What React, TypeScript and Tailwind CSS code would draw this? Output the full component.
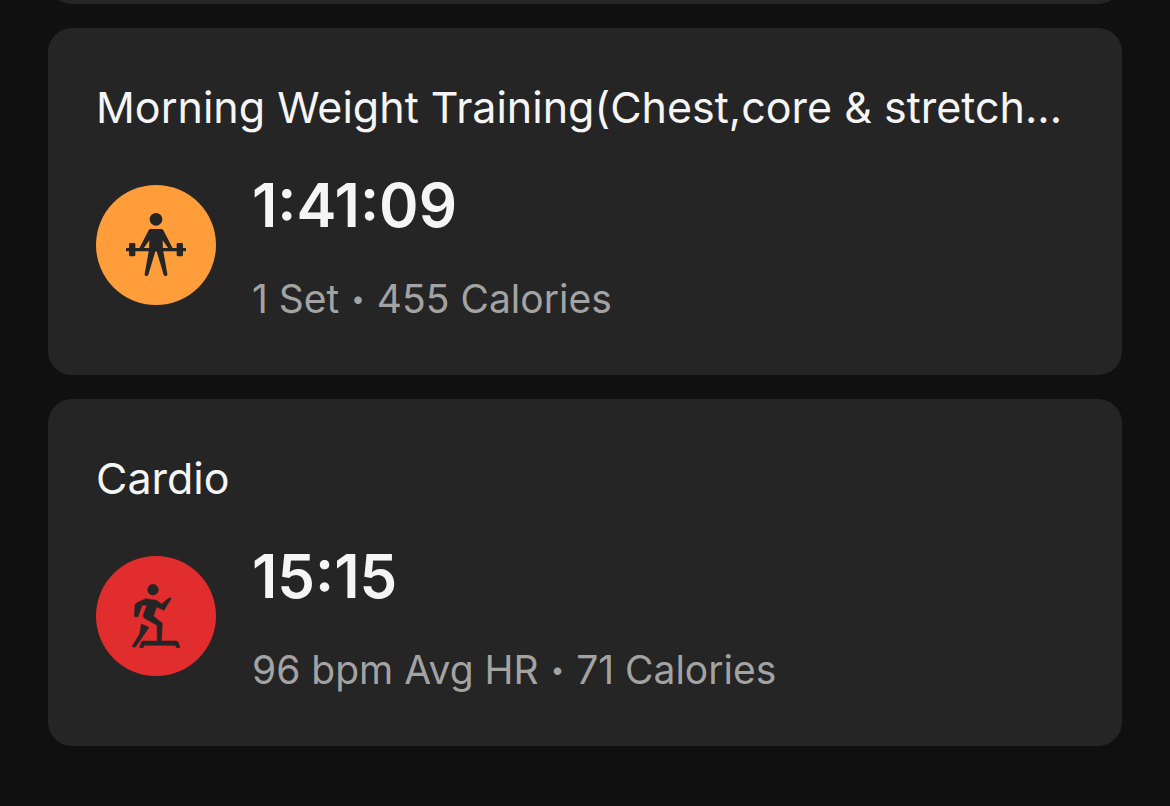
import { Fragment, type ReactNode } from "react";

type Workout = {
  id: string;
  title: string;
  duration: string;
  stats: string[];
  badge: string;
  icon: ReactNode;
};

function WeightsIcon() {
  return (
    <svg viewBox="0 0 360 360" className="h-full w-full" fill="#252525" aria-hidden="true">
      <circle cx="180" cy="103" r="19" />
      {/* arms and torso */}
      <path d="M164 132H196Q200 132 202 136L230 190H217L200 166L201 199H159L160 166L143 190H130L158 136Q160 132 164 132Z" />
      {/* legs */}
      <path d="M159 196H179L157 269Q155 274 150 273Q145 272 146 267L157 205Z" />
      <path d="M201 196H181L203 269Q205 274 210 273Q215 272 214 267L203 205Z" />
      {/* barbell */}
      <rect x="90" y="189" width="180" height="10" rx="2" />
      <rect x="99" y="174" width="19" height="40" rx="4" />
      <rect x="242" y="174" width="19" height="40" rx="4" />
    </svg>
  );
}

function CardioIcon() {
  return (
    <svg
      viewBox="0 0 360 360"
      className="h-full w-full"
      fill="#252525"
      stroke="#252525"
      strokeWidth="1.5"
      strokeLinejoin="round"
      aria-hidden="true"
    >
      <circle cx="171" cy="101" r="16" />
      <path d="M149 128L181 133L197 144L215 129Q220 124 226 127L204 163L182 153L172 180L199 202L196 256H184L183 208L146 187Q140 182 142 176L153 147L138 148L126 182H115L117 148Q118 143 123 140Z" />
      {/* trailing leg */}
      <path d="M136 204L159 214L120 271Q118 275 108 272L131 234Z" />
      {/* step */}
      <path d="M142 255H240Q245 255 247 260L252 275H242L238 268H145L142 275H131L135 260Q137 255 142 255Z" />
    </svg>
  );
}

const workouts: Workout[] = [
  {
    id: "weights",
    title: "Morning Weight Training(Chest,core & stretch...",
    duration: "1:41:09",
    stats: ["1 Set", "455 Calories"],
    badge: "bg-[#fe9d39]",
    icon: <WeightsIcon />,
  },
  {
    id: "cardio",
    title: "Cardio",
    duration: "15:15",
    stats: ["96 bpm Avg HR", "71 Calories"],
    badge: "bg-[#e12d2e]",
    icon: <CardioIcon />,
  },
];

function WorkoutCard({ workout }: { workout: Workout }) {
  return (
    <article className="rounded-3xl bg-[#252525] px-12 pt-12 pb-[52px]">
      <h2 className="truncate text-[43px] leading-[62px] text-[#f5f5f5]">
        {workout.title}
      </h2>
      <div className="mt-[29px] flex items-center gap-9">
        <div className={`size-[120px] shrink-0 rounded-full ${workout.badge}`}>
          {workout.icon}
        </div>
        <div>
          <p className="text-[60px] leading-[76px] font-semibold text-[#f5f5f5]">
            {workout.duration}
          </p>
          <p className="mt-8 flex items-center gap-3 text-[39px] leading-[48px] text-[#a3a3a3]">
            {workout.stats.map((stat, i) => (
              <Fragment key={stat}>
                {i > 0 ? <span className="text-2xl leading-[48px]">•</span> : null}
                <span>{stat}</span>
              </Fragment>
            ))}
          </p>
        </div>
      </div>
    </article>
  );
}

export default function App() {
  return (
    <main className="min-h-screen bg-[#101010] px-12 pb-12 font-['Inter','Liberation_Sans',sans-serif]">
      {/* tail of the card scrolled off the top */}
      <div className="flex h-1 flex-col justify-end overflow-hidden">
        <div className="h-16 shrink-0 rounded-3xl bg-[#252525]" />
      </div>
      <div className="mt-6 flex flex-col gap-6">
        {workouts.map((w) => (
          <WorkoutCard key={w.id} workout={w} />
        ))}
      </div>
    </main>
  );
}
